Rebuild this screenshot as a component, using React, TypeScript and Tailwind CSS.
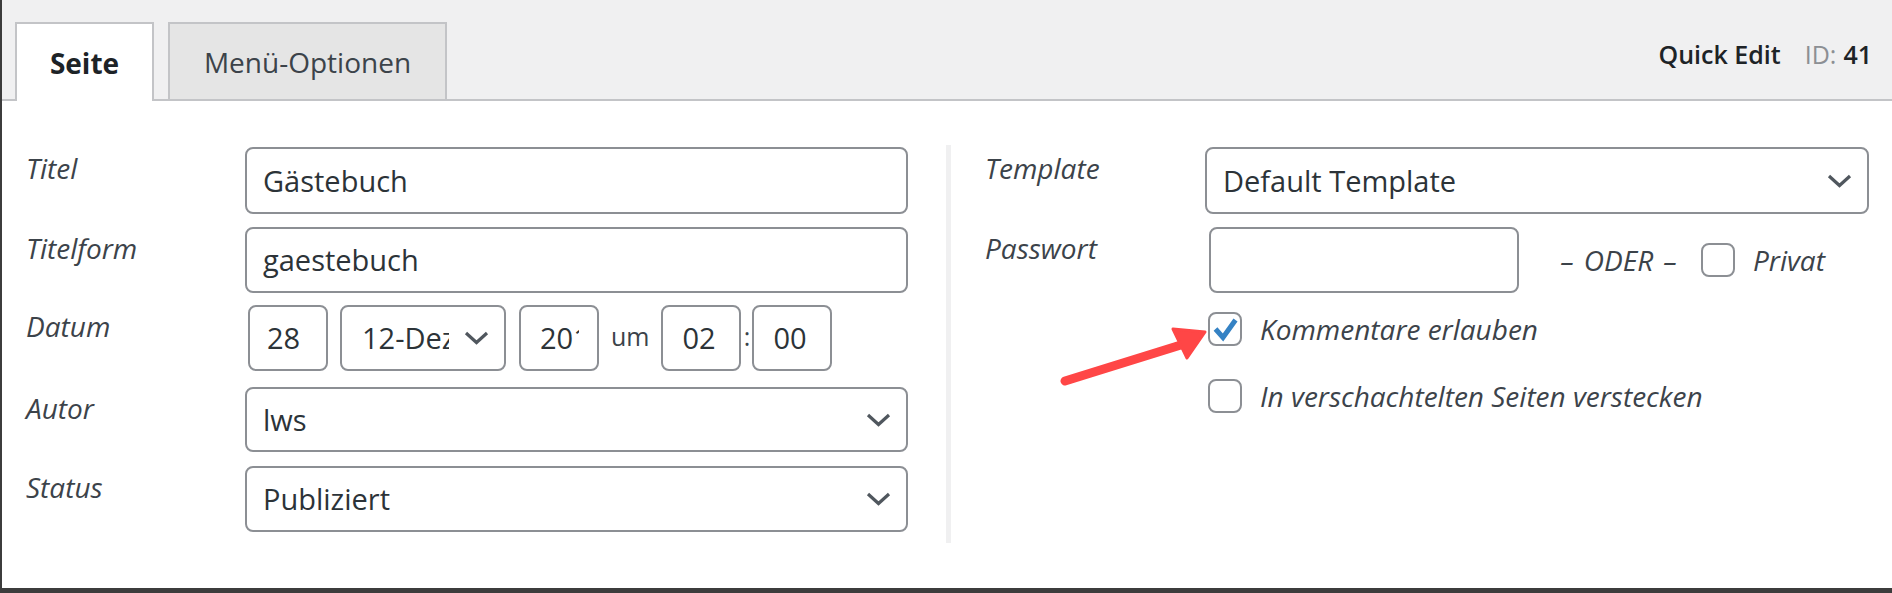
import React from 'react';

const font = "font-['Open_Sans','Noto_Sans',sans-serif]";

const Chevron: React.FC = () => (
  <svg width="25" height="14" viewBox="0 0 25 14" className="shrink-0">
    <polyline points="2,2 12.5,11.5 23,2" fill="none" stroke="#50575e" strokeWidth="3.2" />
  </svg>
);

const Label: React.FC<{ text: string; width: string }> = ({ text, width }) => (
  <div className={`${width} shrink-0 pt-[4px] text-[28px] leading-[34px] italic text-[#3c434a]`}>{text}</div>
);

const TextBox: React.FC<{ value: string }> = ({ value }) => (
  <div className="flex h-full flex-1 items-center rounded-[8px] border-2 border-[#8c8f94] pl-[16px] text-[29px] text-[#2c3338]">
    {value}
  </div>
);

const SelectBox: React.FC<{ value: string }> = ({ value }) => (
  <div className="flex h-full flex-1 items-center justify-between rounded-[8px] border-2 border-[#8c8f94] pl-[16px] pr-[15px] text-[29px] text-[#2c3338]">
    <span>{value}</span>
    <Chevron />
  </div>
);

const Checkbox: React.FC<{ checked?: boolean }> = ({ checked }) => (
  <div className="relative h-[34px] w-[34px] shrink-0 rounded-[8px] border-2 border-[#8c8f94] bg-white">
    {checked && (
      <svg width="34" height="34" viewBox="0 0 34 34" className="absolute -left-[2px] -top-[2px]">
        <polyline points="7.5,17 15,25.5 27.5,8" fill="none" stroke="#3582c4" strokeWidth="5" />
      </svg>
    )}
  </div>
);

const App: React.FC = () => {
  return (
    <div className={`relative h-[593px] w-[1892px] overflow-hidden border-b-[5px] border-l-2 border-[#3c3c3c] bg-white ${font}`}>
      {/* Header with tabs */}
      <div className="flex h-[101px] items-start justify-between border-b-2 border-[#c3c4c7] bg-[#f0f0f1]">
        <div className="-mb-[2px] flex gap-[14px] self-end pl-[13px]">
          <div className="flex h-[79px] w-[139px] items-center justify-center border-2 border-b-0 border-[#c3c4c7] bg-white text-[28px] font-bold text-[#1d2327]">
            Seite
          </div>
          <div className="flex h-[79px] w-[279px] items-center justify-center border-2 border-[#c3c4c7] bg-[#e5e5e5] text-[28px] text-[#3c434a]">
            Menü-Optionen
          </div>
        </div>
        <div className="pr-[20px] pt-[37px] text-[25px] leading-[34px] text-[#1d2327]">
          <span className="font-semibold">Quick Edit</span>
          <span className="ml-[24px] text-[#8c8f94]">ID:</span>
          <span className="ml-[7px] font-semibold">41</span>
        </div>
      </div>

      {/* Body */}
      <div className="flex pt-[46px]">
        {/* Left column */}
        <div className="ml-[24px] flex w-[882px] flex-col">
          <div className="flex h-[67px]">
            <Label text="Titel" width="w-[219px]" />
            <TextBox value="Gästebuch" />
          </div>
          <div className="mt-[13px] flex h-[66px]">
            <Label text="Titelform" width="w-[219px]" />
            <TextBox value="gaestebuch" />
          </div>
          <div className="mt-[12px] flex h-[66px]">
            <Label text="Datum" width="w-[219px]" />
            <div className="flex items-start pl-[3px] text-[29px] text-[#2c3338]">
              <div className="flex h-[66px] w-[80px] items-center rounded-[8px] border-2 border-[#8c8f94] pl-[17px]">28</div>
              <div className="ml-[12px] flex h-[66px] w-[166px] items-center rounded-[8px] border-2 border-[#8c8f94] pl-[20px] pr-[15px]">
                <div className="w-[87px] overflow-hidden whitespace-nowrap">12-Dez</div>
                <div className="ml-auto"><Chevron /></div>
              </div>
              <div className="ml-[13px] flex h-[66px] w-[80px] items-center rounded-[8px] border-2 border-[#8c8f94] pl-[19px]">
                <div className="w-[39px] overflow-hidden whitespace-nowrap">2017</div>
              </div>
              <span className="ml-[12px] pt-[14px] text-[25px] leading-[34px] text-[#3c434a]">um</span>
              <div className="ml-[12px] flex h-[66px] w-[80px] items-center rounded-[8px] border-2 border-[#8c8f94] pl-[19px]">02</div>
              <span className="w-[11px] pt-[14px] text-center text-[25px] leading-[34px] text-[#3c434a]">:</span>
              <div className="flex h-[66px] w-[80px] items-center rounded-[8px] border-2 border-[#8c8f94] pl-[19px]">00</div>
            </div>
          </div>
          <div className="mt-[16px] flex h-[65px]">
            <Label text="Autor" width="w-[219px]" />
            <SelectBox value="lws" />
          </div>
          <div className="mt-[14px] flex h-[66px]">
            <Label text="Status" width="w-[219px]" />
            <SelectBox value="Publiziert" />
          </div>
        </div>

        {/* Divider */}
        <div className="-mt-[2px] ml-[38px] h-[398px] w-[5px] shrink-0 bg-[#f0f0f1]" />

        {/* Right column */}
        <div className="ml-[34px] flex w-[884px] flex-col">
          <div className="flex h-[67px]">
            <Label text="Template" width="w-[220px]" />
            <SelectBox value="Default Template" />
          </div>
          <div className="mt-[13px] flex h-[66px]">
            <Label text="Passwort" width="w-[220px]" />
            <div className="flex items-center pl-[4px] text-[28px] italic text-[#3c434a]">
              <div className="h-[66px] w-[310px] rounded-[8px] border-2 border-[#8c8f94]" />
              <div className="ml-[34px] flex w-[131px] justify-center gap-[10px]">
                <span>–</span>
                <span>ODER</span>
                <span>–</span>
              </div>
              <div className="ml-[17px]"><Checkbox /></div>
              <span className="ml-[18px]">Privat</span>
            </div>
          </div>
          <div className="mt-[19px] flex h-[34px] items-center pl-[223px] text-[28px] italic text-[#3c434a]">
            <Checkbox checked />
            <span className="ml-[18px]">Kommentare erlauben</span>
          </div>
          <div className="mt-[33px] flex h-[34px] items-center pl-[223px] text-[28px] italic text-[#3c434a]">
            <Checkbox />
            <span className="ml-[18px]">In verschachtelten Seiten verstecken</span>
          </div>
        </div>
      </div>

      {/* Annotation arrow */}
      <svg width="150" height="70" viewBox="0 0 150 70" className="pointer-events-none absolute left-[1058px] top-[320px]">
        <line x1="5" y1="61" x2="124" y2="24" stroke="#ff4646" strokeWidth="9" strokeLinecap="round" />
        <polygon points="145,12 113,9 127,38" fill="#ff4646" stroke="#ff4646" strokeWidth="3" strokeLinejoin="round" />
      </svg>
    </div>
  );
};

export default App;
